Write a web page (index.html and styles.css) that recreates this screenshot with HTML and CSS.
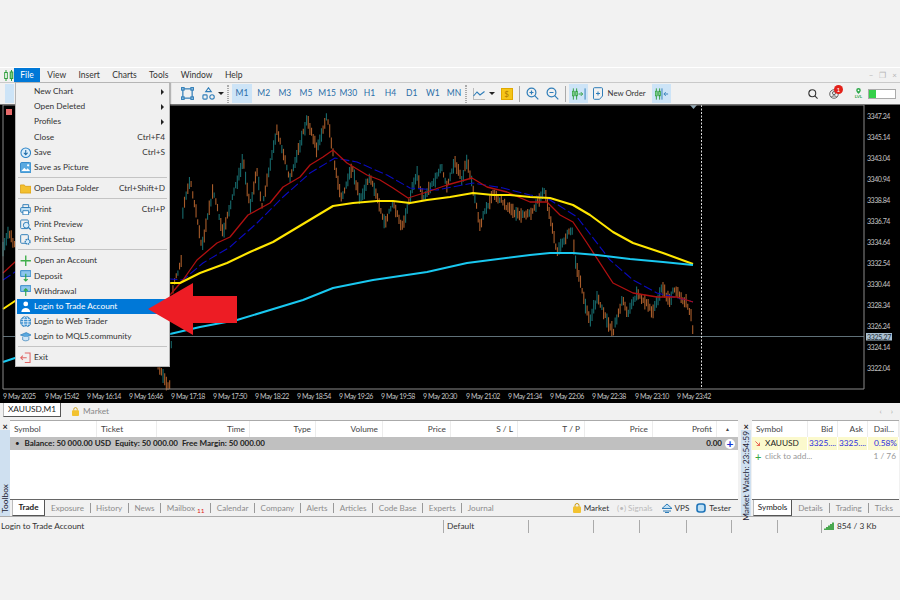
FILE: index.html
```html
<!DOCTYPE html>
<html lang="en">
<head>
<meta charset="utf-8">
<title>MetaTrader 5</title>
<link rel="stylesheet" href="styles.css">
</head>
<body>
<div class="top-strip"></div>
<div class="app">
  <nav class="menubar">
    <svg class="logo" viewBox="0 0 10 11"><path d="M2 0v11M7.500 0v11" stroke="#2e9e3c" stroke-width="1"/><rect x=".7" y="2.500" width="2.600" height="6" fill="#fff" stroke="#2e9e3c"/><rect x="6.200" y="2" width="2.600" height="6.500" fill="#7fd08a" stroke="#2e9e3c"/></svg>
    <span class="mi mi-active">File</span><span class="mi mi-view">View</span><span class="mi">Insert</span><span class="mi">Charts</span><span class="mi">Tools</span><span class="mi">Window</span><span class="mi">Help</span>
    <span class="winctl"><span>–</span><span>❐</span><span>×</span></span>
  </nav>

  <div class="toolbar">
    <span class="tb-hidden"><span class="tb-on tb-first"></span></span>
    <svg class="ic14" viewBox="0 0 14 14" fill="none" stroke="#2f7db8" stroke-width="1.300"><rect x="2" y="2" width="10" height="10"/><g fill="#cfe4f4"><rect x=".7" y=".7" width="2.600" height="2.600"/><rect x="10.700" y=".7" width="2.600" height="2.600"/><rect x=".7" y="10.700" width="2.600" height="2.600"/><rect x="10.700" y="10.700" width="2.600" height="2.600"/></g></svg>
    <svg class="ic14 shapes" viewBox="0 0 14 14" fill="none" stroke="#2f7db8" stroke-width="1.200"><path d="M7 .8 10 5H4z"/><rect x="1" y="8.500" width="4.500" height="4.500" rx="1"/><circle cx="10.800" cy="10.700" r="2.400"/></svg>
    <span class="caret"></span>
    <span class="tb-sep sep-a"></span>
    <div class="tfs">
      <span class="tf tf-on">M1</span><span class="tf">M2</span><span class="tf">M3</span><span class="tf">M5</span><span class="tf">M15</span><span class="tf">M30</span><span class="tf">H1</span><span class="tf">H4</span><span class="tf">D1</span><span class="tf">W1</span><span class="tf">MN</span>
    </div>
    <span class="tb-sep sep-b"></span>
    <svg class="ic12" viewBox="0 0 12 12" fill="none"><path d="M0 11.500h12M.5 0v12" stroke="#bbb"/><path d="M.5 8 4 4l3 3 4.500-3.500" stroke="#2f7db8" stroke-width="1.100"/></svg>
    <span class="caret caret-b"></span>
    <span class="coin">$</span>
    <span class="tb-sep2 sep-c"></span>
    <svg class="ic13" viewBox="0 0 13 13" fill="none" stroke="#2f7db8" stroke-width="1.200"><circle cx="5.500" cy="5.500" r="4.400"/><path d="m8.700 8.700 3.600 3.600M3.500 5.500h4M5.500 3.500v4"/></svg>
    <svg class="ic13 zoomout" viewBox="0 0 13 13" fill="none" stroke="#2f7db8" stroke-width="1.200"><circle cx="5.500" cy="5.500" r="4.400"/><path d="m8.700 8.700 3.600 3.600M3.500 5.500h4"/></svg>
    <span class="tb-sep2 sep-d"></span>
    <span class="tb-on tb-scroll"><svg class="ic14w" viewBox="0 0 16 12" fill="none"><path d="M2.500 0v12M6 0v12" stroke="#2e9e3c"/><rect x="1.500" y="3" width="2" height="5" fill="#7fd08a" stroke="#2e9e3c" stroke-width=".7"/><rect x="5" y="3" width="2" height="5" fill="#7fd08a" stroke="#2e9e3c" stroke-width=".7"/><path d="M8 6h4M10.500 4l2 2-2 2" stroke="#2e9e3c"/><path d="M15 0v12" stroke="#2f7db8"/></svg></span>
    <svg class="ic-order" viewBox="0 0 10 13" fill="none" stroke="#2f7db8"><path d="M1.500.7h7a1 1 0 0 1 1 1V9L6.500 12.300h-5a1 1 0 0 1-1-1V1.700a1 1 0 0 1 1-1z"/><path d="M3 6.500h4M5 4.500v4"/></svg>
    <span class="neworder">New Order</span>
    <span class="tb-on tb-shift"><svg class="ic14w" viewBox="0 0 16 12" fill="none"><path d="M2.500 0v12M6 0v12" stroke="#2e9e3c"/><rect x="1.500" y="3" width="2" height="5" fill="#7fd08a" stroke="#2e9e3c" stroke-width=".7"/><rect x="5" y="3" width="2" height="5" fill="#7fd08a" stroke="#2e9e3c" stroke-width=".7"/><path d="M8.500 0v12" stroke="#2f7db8"/><path d="M15 6h-4M12.500 4l-2 2 2 2" stroke="#2f7db8"/></svg></span>
    <span class="tb-right">
      <svg class="ic-search" viewBox="0 0 11 11" fill="none" stroke="#333" stroke-width="1.200"><circle cx="4.700" cy="4.700" r="3.800"/><path d="m7.500 7.500 3 3"/></svg>
      <span class="notif">
        <svg class="ic-user" viewBox="0 0 11 11" fill="none" stroke="#555"><circle cx="5.500" cy="5.500" r="4.700"/><circle cx="5.500" cy="4.500" r="1.700"/><path d="M2.500 9c.6-2 5.400-2 6 0"/></svg>
        <span class="badge">1</span>
      </span>
      <span class="lvl"><svg class="ic-pin" viewBox="0 0 8 7"><path d="M4 0a2.700 2.700 0 0 1 2.700 2.700C6.700 4.500 4 7 4 7S1.300 4.500 1.300 2.700A2.700 2.700 0 0 1 4 0z" fill="#2ea84a"/><circle cx="4" cy="2.700" r="1" fill="#fff"/></svg><span class="lvl-t">LVL</span></span>
      <span class="battery"><span class="battery-fill"></span></span>
    </span>
  </div>

  <section class="chart">
    <svg class="chart-svg" viewBox="0 105 900 298">
      <rect x="0" y="105" width="900" height="298" fill="#000"/>
      <g id="bars"></g>
      <path class="grid-line" d="M3 336.500H864"/>
      <path class="cross" d="M701.500 105V389"/>
      <path class="marker" d="M690 105h7l-3.500 4z"/>
      <polyline class="ma blue" points="3,280 15,272 170,279 183,280 203,263 230,247 257,223 283,197 310,173 335,158 357,162 387,175 410,188 437,190 473,183 503,188 530,195 547,198 577,217 610,260 633,280 657,293 687,300 693,302"/>
      <polyline class="ma red" points="3,273 15,262 170,295 183,280 197,260 217,243 230,237 248,215 270,203 283,187 300,177 310,165 323,157 333,150 347,163 367,175 380,180 393,188 408,198 427,192 447,185 472,178 487,187 507,192 530,202 547,202 560,215 573,222 587,243 613,283 633,293 657,297 677,297 693,302"/>
      <polyline class="ma yellow" points="3,309 15,301 170,283 180,283 200,273 227,263 250,252 273,242 293,230 313,218 333,206 353,203 377,201 393,201 410,203 427,200 450,197 473,193 493,195 510,195 530,197 550,198 573,205 590,215 613,232 633,243 663,253 693,264"/>
      <polyline class="ma cyan" points="3,362 15,358 170,334 200,327 237,320 303,300 333,288 373,280 427,272 467,263 530,255 550,253 573,253 597,255 630,259 663,262 693,265"/>
      <path class="frame" d="M3 105V389H864V105H3"/>
      <rect class="flag" x="6" y="109" width="6" height="6"/>
      <g class="ax-y">
        <text x="867" y="118.500">3347.24</text><text x="867" y="139.500">3345.14</text><text x="867" y="160.500">3343.04</text><text x="867" y="181.500">3340.94</text><text x="867" y="202.500">3338.84</text><text x="867" y="223.500">3336.74</text><text x="867" y="244.500">3334.64</text><text x="867" y="265.500">3332.54</text><text x="867" y="286.500">3330.44</text><text x="867" y="307.500">3328.34</text><text x="867" y="328.500">3326.24</text><text x="867" y="349.500">3324.14</text><text x="867" y="370.500">3322.04</text>
      </g>
      <rect class="tag" x="866" y="333" width="26" height="7.500"/>
      <text class="tag-t" x="867" y="339.500">3325.27</text>
      <g class="ax-x">
        <text x="3" y="398.500">9 May 2025</text><text x="45" y="398.500">9 May 15:42</text><text x="87" y="398.500">9 May 16:14</text><text x="129" y="398.500">9 May 16:46</text><text x="171" y="398.500">9 May 17:18</text><text x="213" y="398.500">9 May 17:50</text><text x="255" y="398.500">9 May 18:22</text><text x="297" y="398.500">9 May 18:54</text><text x="339" y="398.500">9 May 19:26</text><text x="381" y="398.500">9 May 19:58</text><text x="423" y="398.500">9 May 20:30</text><text x="466" y="398.500">9 May 21:02</text><text x="508" y="398.500">9 May 21:34</text><text x="550" y="398.500">9 May 22:06</text><text x="592" y="398.500">9 May 22:38</text><text x="635" y="398.500">9 May 23:10</text><text x="677" y="398.500">9 May 23:42</text>
      </g>
    </svg>
  </section>

  <div class="chart-tabs">
    <span class="ctab-active">XAUUSD,M1</span>
    <svg class="lock" viewBox="0 0 8 10"><path d="M2 4V2.500a2 2 0 0 1 4 0V4" fill="none" stroke="#c99a10"/><rect y="3.500" width="8" height="6.500" rx="1" fill="#f2c230"/></svg>
    <span class="ctab">Market</span>
    <span class="ctab-nav"><span>‹</span><span>›</span></span>
  </div>

  <div class="terminal">
    <aside class="strip strip-left"><span class="strip-x">×</span><span class="strip-t">Toolbox</span></aside>
    <div class="pane pane-main">
      <div class="grid trade-head">
        <span class="l">Symbol</span><span class="l">Ticket</span><span>Time</span><span>Type</span><span>Volume</span><span>Price</span><span>S / L</span><span>T / P</span><span>Price</span><span>Profit</span><span class="sort">▲</span>
      </div>
      <div class="balance">
        <span class="bullet">•</span><span class="bal-t">Balance: 50 000.00 USD&nbsp; Equity: 50 000.00&nbsp; Free Margin: 50 000.00</span>
        <span class="bal-v">0.00</span><span class="bal-plus">+</span>
      </div>
      <div class="pane-fill"></div>
      <div class="tabs tabs-main">
        <span class="tab tab-on tab-trade">Trade</span><span class="tab">Exposure</span><span class="tab">History</span><span class="tab">News</span><span class="tab">Mailbox<sub class="mail">11</sub></span><span class="tab">Calendar</span><span class="tab">Company</span><span class="tab">Alerts</span><span class="tab">Articles</span><span class="tab">Code Base</span><span class="tab">Experts</span><span class="tab tab-last">Journal</span>
        <span class="svc">
          <svg class="lock2" viewBox="0 0 8 10"><path d="M2 4V2.500a2 2 0 0 1 4 0V4" fill="none" stroke="#c99a10"/><rect y="3.500" width="8" height="6.500" rx="1" fill="#f2c230"/></svg><span class="svc-t">Market</span>
          <span class="svc-off">(•) Signals</span>
          <svg class="cloud" viewBox="0 0 12 10" fill="#bfe0f5" stroke="#2f7db8"><path d="M1 5.500 6 1l5 4.500H1z"/><path d="M2 8h8M4 9.500h4" fill="none"/></svg><span class="svc-t">VPS</span>
          <svg class="tester" viewBox="0 0 10 10"><rect x="1" y="1" width="8" height="8" rx="2.500" fill="#bfe0f5" stroke="#1f74b8" stroke-width="1.600"/></svg><span class="svc-t">Tester</span>
        </span>
      </div>
    </div>
    <aside class="strip strip-right"><span class="strip-x">×</span><span class="strip-t">Market Watch: 23:54:59</span></aside>
    <div class="pane pane-mw">
      <div class="grid-mw mw-head"><span class="l">Symbol</span><span>Bid</span><span>Ask</span><span>Dail...</span></div>
      <div class="grid-mw mw-row">
        <span class="l mw-sym"><svg class="down" viewBox="0 0 6 6" fill="none" stroke="#e2453a"><path d="m.5.500 5 5M5.500 2v3.500H2"/></svg>XAUUSD</span><span class="num">3325....</span><span class="num">3325....</span><span class="num">0.58%</span>
      </div>
      <div class="mw-add"><span class="plus">+</span><span class="add-t">click to add...</span><span class="add-c">1 / 76</span></div>
      <div class="pane-fill"></div>
      <div class="tabs tabs-mw"><span class="tab tab-on tab-sym">Symbols</span><span class="tab tab-mw">Details</span><span class="tab tab-mw">Trading</span><span class="tab tab-mw tab-last">Ticks</span></div>
    </div>
  </div>

  <footer class="status">
    <span>Login to Trade Account</span><span class="st">Default</span><span class="st"></span><span class="st"></span><span class="st"></span><span class="st"></span><span class="st"></span><span class="st"></span>
    <span class="st st-net"><svg class="net" viewBox="0 0 10 8"><path d="M0 8V6.500h2V8zM2 8V5h2v3zM4 8V3.500h2V8zM6 8V2h2v6zM8 8V.5h2V8z" fill="#49a84f"/></svg>854 / 3 Kb</span>
  </footer>
</div>

<div class="file-menu">
  <div class="row"><span class="i"></span><span>New Chart</span><span class="sub"></span></div>
  <div class="row"><span class="i"></span><span>Open Deleted</span><span class="sub"></span></div>
  <div class="row"><span class="i"></span><span>Profiles</span><span class="sub"></span></div>
  <div class="row"><span class="i"></span><span>Close</span><span class="key">Ctrl+F4</span></div>
  <div class="row"><span class="i"><svg viewBox="0 0 12 12" fill="none" stroke="#2f86c8" stroke-width="1.100"><circle cx="6" cy="6" r="5" fill="#dbeefb"/><path d="M6 3v5M4 6l2 2 2-2" stroke="#1c6aa6"/></svg></span><span>Save</span><span class="key">Ctrl+S</span></div>
  <div class="row"><span class="i"><svg viewBox="0 0 12 12"><rect x=".5" y=".5" width="11" height="11" rx="1.500" fill="#5aa9e0" stroke="#2f86c8"/><path d="m1.500 9.500 3-3.500 2 2 1.500-1.500 2.500 3z" fill="#fff"/><circle cx="8.500" cy="3.500" r="1.200" fill="#fff"/></svg></span><span>Save as Picture</span></div>
  <div class="msep"></div>
  <div class="row"><span class="i"><svg viewBox="0 0 12 10"><path d="M.5 1h4l1 1.500h6V9.500H.5z" fill="#f3c02f" stroke="#d99e12" stroke-width=".8"/></svg></span><span>Open Data Folder</span><span class="key">Ctrl+Shift+D</span></div>
  <div class="msep"></div>
  <div class="row"><span class="i"><svg viewBox="0 0 12 12" fill="#bfe0f5" stroke="#2f7db8"><path d="M3 .7h6v3H3z" fill="none"/><rect x=".7" y="3.700" width="10.600" height="5" rx="1"/><path d="M3 7h6v4.300H3z" fill="#fff"/></svg></span><span>Print</span><span class="key">Ctrl+P</span></div>
  <div class="row"><span class="i"><svg viewBox="0 0 12 12" fill="none" stroke="#2f7db8"><rect x=".7" y="1" width="8" height="9" rx="1"/><circle cx="6.500" cy="6.500" r="3" fill="#dbeefb"/><path d="m8.700 8.700 2.600 2.600" stroke-width="1.300"/></svg></span><span>Print Preview</span></div>
  <div class="row"><span class="i"><svg viewBox="0 0 12 12" fill="none" stroke="#2f7db8"><rect x=".7" y=".7" width="8" height="9" rx="1"/><circle cx="8" cy="8" r="2.500" fill="#dbeefb" stroke-width="1.400" stroke-dasharray="1.500 .6"/></svg></span><span>Print Setup</span></div>
  <div class="msep"></div>
  <div class="row"><span class="i"><svg viewBox="0 0 10 10" stroke="#3fae4a" stroke-width="1.200"><path d="M5 .5v9M.5 5h9"/></svg></span><span>Open an Account</span></div>
  <div class="row"><span class="i"><svg viewBox="0 0 12 12"><path d="M.7.7h10.600v6H.7z" fill="#8cc6ec" stroke="#2f86c8"/><path d="M6 4v7.500M4 9.500l2 2 2-2" fill="none" stroke="#2fa84a" stroke-width="1.200"/></svg></span><span>Deposit</span></div>
  <div class="row"><span class="i"><svg viewBox="0 0 12 12"><path d="M.7.7h10.600v6H.7z" fill="#8cc6ec" stroke="#2f86c8"/><path d="M6 11.500V4M4 6l2-2 2 2" fill="none" stroke="#2fa84a" stroke-width="1.200"/></svg></span><span>Withdrawal</span></div>
  <div class="row row-on"><span class="i"><svg viewBox="0 0 10 11" fill="#fff"><circle cx="5" cy="2.800" r="2.300"/><path d="M.8 10.500c0-5 8.400-5 8.400 0z"/></svg></span><span>Login to Trade Account</span></div>
  <div class="row"><span class="i"><svg viewBox="0 0 12 12" fill="none" stroke="#fff" stroke-width=".8"><circle cx="6" cy="6" r="5.500" fill="#3a8fd0" stroke="#2f7db8"/><ellipse cx="6" cy="6" rx="2.300" ry="5.300"/><path d="M.7 6h10.600M1.500 3.500h9M1.500 8.500h9"/></svg></span><span>Login to Web Trader</span></div>
  <div class="row"><span class="i"><svg viewBox="0 0 13 11"><path d="M.5 3.500 7 .8l5.500 2.700L7 6z" fill="#5aa9e0" stroke="#2f7db8" stroke-width=".8"/><path d="M3 5.500V9c2 1.500 5 1.500 7 0V5.500" fill="#cfe6f7" stroke="#2f7db8" stroke-width=".8"/></svg></span><span>Login to MQL5.community</span></div>
  <div class="msep"></div>
  <div class="row"><span class="i"><svg viewBox="0 0 12 12" fill="none" stroke="#e06666" stroke-width="1.100"><path d="M5 1h5.500v10H5M1 6h6M3 3.800 .8 6 3 8.200"/></svg></span><span>Exit</span></div>
</div>

<svg class="red-arrow" viewBox="148 283 89 52"><path d="M148 309 193 283V296H237V323H193V335z"/></svg>
<script src="chart.js"></script>
</body>
</html>
```
FILE: styles.css
```css
* { box-sizing: border-box; }
html, body { margin: 0; height: 100%; }
body {
  width: 900px; height: 600px; overflow: hidden; position: relative;
  background: #f2f2f2; color: #333;
  font: 8.3px/1 Lato, "Liberation Sans", sans-serif;
}
svg { display: block; flex: none; }
.top-strip { height: 68px; border-bottom: 1px solid #fff; }

/* menu bar */
.menubar { height: 14px; display: flex; align-items: center; background: #f1f1f1; padding-left: 4px; }
.logo { width: 10px; height: 11px; }
.mi { padding: 0 6.200px; height: 14px; line-height: 14px; font-size: 8.500px; color: #333; }
.mi-active { background: #0078d7; color: #fff; width: 26px; text-align: center; padding: 0; margin-right: 0; }
.mi-view { margin-left: 1px; }
.winctl { margin-left: auto; display: flex; gap: 6px; padding-right: 3px; color: #b5b5b5; font-size: 8px; }

/* toolbar */
.toolbar { height: 23px; display: flex; align-items: center; border-top: 1px solid #c9c9c9; border-bottom: 1px solid #777; background: #f1f1f1; }
.tb-hidden { width: 181px; display: flex; align-items: center; padding-left: 5px; flex: none; }
.tb-on { background: #cde4f7; height: 19px; display: flex; align-items: center; justify-content: center; flex: none; }
.tb-first { width: 9px; }
.ic14 { width: 13px; height: 13px; }
.shapes { margin-left: 8px; }
.caret { width: 0; height: 0; border: 3px solid transparent; border-top: 3.500px solid #222; border-bottom: 0; margin-left: 3px; flex: none; }
.caret-b { margin-left: 4px; }
.tb-sep { width: 2px; height: 18px; border-left: 1px dotted #aaa; border-right: 1px dotted #aaa; flex: none; }
.tb-sep2 { width: 1px; height: 16px; background: #aaa; flex: none; }
.sep-a { margin-left: 3px; margin-right: 3px; }
.tfs { display: flex; flex: none; }
.tf { width: 21.150px; text-align: center; height: 19px; line-height: 19px; color: #2a6ea8; font-size: 8.500px; }
.tf-on { background: #cde4f7; width: 20px; margin-right: 1.150px; }
.sep-b { margin-left: 0; margin-right: 6px; }
.ic12 { width: 12px; height: 12px; }
.coin { width: 12px; height: 12px; background: #f5c518; border: 1px solid #e0a800; color: #b07a00; text-align: center; line-height: 10px; margin-left: 6px; font-size: 8px; flex: none; }
.sep-c { margin-left: 6px; margin-right: 6px; }
.ic13 { width: 13px; height: 13px; }
.zoomout { margin-left: 7px; }
.sep-d { margin-left: 6px; margin-right: 3px; }
.tb-scroll { width: 19px; }
.tb-shift { width: 19px; margin-left: 6px; }
.ic14w { width: 15px; height: 12px; }
.ic-order { width: 10px; height: 13px; margin-left: 5px; }
.neworder { margin-left: 5px; color: #333; font-size: 7.800px; }
.tb-right { margin-left: auto; display: flex; align-items: center; padding-right: 4px; }
.ic-search { width: 10px; height: 10px; margin-right: 11px; }
.notif { position: relative; width: 11px; margin-right: 14px; }
.ic-user { width: 10px; height: 10px; }
.badge { position: absolute; left: 5px; top: -4px; width: 9px; height: 9px; border-radius: 50%; background: #e32119; color: #fff; font-size: 6.500px; line-height: 9px; text-align: center; }
.lvl { display: flex; flex-direction: column; align-items: center; width: 9px; margin-right: 5px; }
.ic-pin { width: 7px; height: 6px; }
.lvl-t { font-size: 4.500px; color: #2ea84a; font-weight: 700; margin-top: 1px; }
.battery { width: 28px; height: 10px; border: 1px solid #aaa; background: #fff; display: block; }
.battery-fill { display: block; width: 7px; height: 100%; background: #35d04a; }

/* chart */
.chart { height: 298px; background: #000; }
.chart-svg { width: 900px; height: 298px; }
.frame { fill: none; stroke: #8a8a8a; stroke-width: 1; }
.grid-line { stroke: #5f7078; stroke-width: 1; }
.cross { stroke: #d8d8d8; stroke-width: 1; stroke-dasharray: 2 1.500; }
.marker { fill: #8ea7b5; }
.ma { fill: none; stroke-linejoin: round; }
.yellow { stroke: #ffe600; stroke-width: 2.100; }
.cyan { stroke: #19c8f0; stroke-width: 2; }
.red { stroke: #b01010; stroke-width: 1.300; }
.blue { stroke: #0a0ac0; stroke-width: 1.100; stroke-dasharray: 9 3; }
.flag { fill: #e66a6a; }
.ax-y text, .ax-x text { fill: #c4c4c4; font: 7px Lato, sans-serif; letter-spacing: -.45px; }
.tag { fill: #a8bfd1; }
.tag-t { fill: #1e2b33; font: 7px Lato, sans-serif; letter-spacing: -.3px; }

/* chart tabs */
.chart-tabs { height: 16px; display: flex; align-items: center; background: #f1f1f1; padding-left: 3px; }
.ctab-active { width: 58px; height: 14px; background: #fff; border: 1px solid #bbb; border-right: 1px solid #555; border-bottom: 1px solid #555; border-top: 0; text-align: center; line-height: 13px; align-self: flex-start; color: #222; }
.lock { width: 7px; height: 9px; margin-left: 11px; }
.ctab { margin-left: 4px; color: #888; }
.ctab-nav { margin-left: auto; display: flex; gap: 9px; padding-right: 7px; color: #aaa; font-size: 8px; }

/* terminal */
.terminal { height: 98px; display: flex; border-bottom: 1px solid #aaa; background: #f1f1f1; padding-top: 1px; }
.strip { width: 10px; position: relative; background: linear-gradient(#f0f0f0 0 10px, #cfe0f0 10px); flex: none; display: flex; flex-direction: column; align-items: center; }
.strip-x { font-size: 9px; font-weight: 700; line-height: 9px; margin-top: 2px; color: #222; }
.strip-t { writing-mode: vertical-rl; transform: rotate(180deg); margin-top: auto; margin-bottom: 3px; font-size: 8.400px; color: #223; line-height: 10px; white-space: nowrap; }
.pane { display: flex; flex-direction: column; background: #fff; border-top: 1px solid #aaa; }
.pane-main { width: 728px; }
.strip-right { margin-left: 3px; }
.pane-mw { width: 147px; margin-left: 1px; }
.pane-fill { flex: 1; }
.grid { display: grid; grid-template-columns: 87px 60px 93px 66px 67px 68px 67px 67px 68px 64px 21px; height: 16px; align-items: stretch; }
.grid > span, .grid-mw > span { text-align: right; padding: 0 4px; line-height: 16px; border-right: 1px solid #ececec; color: #444; white-space: nowrap; overflow: hidden; }
.grid > .l, .grid-mw > .l { text-align: left; }
.grid > .sort { font-size: 5px; text-align: center; border: 0; padding: 0; }
.balance { height: 13px; background: #c0c0c0; display: flex; align-items: center; font-size: 8px; font-weight: 700; color: #222; line-height: 13px; }
.bullet { margin-left: 5px; width: 9.500px; font-weight: 400; }
.bal-v { margin-left: auto; margin-right: 3px; }
.bal-plus { width: 10px; height: 10px; border-radius: 50%; background: #fff; color: #1430d0; font-size: 12px; line-height: 9px; text-align: center; margin-right: 3px; }
.tabs { height: 17px; display: flex; align-items: center; background: #f1f1f1; border-top: 1px solid #666; flex: none; }
.tabs-main { padding-left: 2px; }
.tab { color: #8c8c8c; padding: 0 5.600px; border-right: 1px solid #999; line-height: 10px; height: 10px; white-space: nowrap; font-size: 8.100px; }
.tab:nth-child(2) { padding-left: 6px; }
.tab-mw { padding: 0 6px; }
.tab-last { border-right: 0; }
.tab-on { background: #fff; color: #222; height: 16px; line-height: 14px; border: 1px solid #666; border-top: 0; border-left: 1px solid #bbb; border-right: 1px solid #555; border-bottom: 1px solid #555; align-self: flex-start; font-weight: 700; }
.tab-trade { width: 33px; text-align: center; padding: 0; margin-right: 0; }
.tab-sym { width: 42px; text-align: center; padding: 0; margin-left: 1px; font-weight: 400; }
.mail { color: #e02020; font-size: 6.500px; vertical-align: -2px; margin-left: 2px; line-height: 0; }
.svc { margin-left: auto; display: flex; align-items: center; padding-right: 7px; }
.svc-t { color: #333; font-size: 8.100px; }
.lock2 { width: 8px; height: 10px; margin-right: 3px; }
.svc-off { color: #bbb; margin-left: 8px; margin-right: 8px; font-size: 8.100px; }
.cloud { width: 12px; height: 10px; margin-right: 2px; }
.tester { width: 10px; height: 10px; margin-left: 7px; margin-right: 3px; }

/* market watch */
.grid-mw { display: grid; grid-template-columns: 56px 30px 30px 31px; }
.mw-head { height: 16px; }
.mw-row { height: 13px; background: #fbf9cd; }
.mw-row > span { line-height: 13px; border-right: 1px solid #fff; }
.mw-row .num { color: #2a2ae0; padding: 0 1px; }
.mw-sym { display: flex; align-items: center; color: #222 !important; padding: 0 0 0 3px !important; }
.down { width: 5px; height: 5px; margin-right: 5px; }
.mw-add { height: 13px; display: flex; align-items: center; padding: 0 3px 0 3px; color: #999; }
.plus { color: #35a83f; font-size: 11px; width: 10px; line-height: 11px; }
.add-c { margin-left: auto; }
.tabs-mw { padding-left: 0; }

/* status bar */
.status { height: 18px; display: grid; grid-template-columns: 442px 85px 65px 46px 47px 45px 46px 44px 79px; align-items: center; padding-left: 1px; color: #333; }
.st { border-left: 1px solid #aaa; height: 13px; line-height: 13px; padding-left: 3px; white-space: nowrap; }
.st-net { display: flex; align-items: center; gap: 3px; padding-left: 2px; }
.net { width: 10px; height: 8px; }

/* file menu overlay */
.file-menu { position: absolute; left: 15px; top: 82px; width: 155px; height: 285px; padding: 1px; background: #f0f0f0; border: 1px solid #b5b5b5; box-shadow: 1px 1px 1px rgba(0,0,0,.25); z-index: 5; }
.row { height: 15.200px; display: flex; align-items: center; padding-right: 3px; line-height: 15px; color: #333; }
.row .i { width: 17px; display: flex; justify-content: center; flex: none; }
.row .i svg { width: 11.500px; height: 11.500px; }
.key { margin-left: auto; }
.sub { margin-left: auto; width: 0; height: 0; border: 3px solid transparent; border-left: 3.500px solid #222; border-right: 0; margin-right: 1px; }
.msep { height: 5.800px; position: relative; }
.msep::after { content: ""; position: absolute; left: 1px; right: 1px; top: 2px; height: 1px; background: #c4c4c4; }
.row-on { background: #0078d7; color: #fff; }

.red-arrow { position: absolute; left: 148px; top: 283px; width: 89px; height: 52px; z-index: 6; }
.red-arrow path { fill: #ed1c24; }
```
FILE: chart.js
```js
// Draws the price bars from a coarse price path.
var path = [[3,250],[8,232],[15,245],[150,340],[160,367],[167,385],[170,386],[173,287],[182,260],[183,207],[190,180],[197,217],[202,247],[213,190],[223,233],[243,160],[250,207],[257,170],[262,207],[277,130],[290,180],[307,120],[317,150],[327,115],[335,167],[342,200],[352,167],[360,200],[370,177],[385,223],[393,203],[402,227],[417,172],[423,200],[442,167],[447,187],[455,163],[462,180],[467,160],[480,225],[493,193],[513,213],[530,215],[545,190],[555,243],[558,252],[572,227],[575,260],[585,303],[590,320],[597,298],[613,332],[622,300],[628,313],[637,293],[653,312],[662,287],[670,303],[673,290],[687,303],[692,320],[693.5,338]];
var seed = 7;
function rnd() { seed = (seed * 16807) % 2147483647; return seed / 2147483647; }
function priceAt(x) {
  for (var i = 1; i < path.length; i++) {
    if (x <= path[i][0]) {
      var a = path[i - 1], b = path[i];
      return { y: a[1] + (b[1] - a[1]) * (x - a[0]) / (b[0] - a[0]), up: b[1] < a[1] };
    }
  }
  return { y: path[path.length - 1][1], up: false };
}
var g = document.getElementById('bars');
for (var x = 3; x <= 693.5; x += 1.65) {
  var p = priceAt(x);
  var up = rnd() < (p.up ? 0.8 : 0.2);
  var h = 2.5 + rnd() * 5;
  var mid = p.y + (rnd() - 0.5) * 4;
  var l = document.createElementNS('http://www.w3.org/2000/svg', 'line');
  l.setAttribute('x1', x); l.setAttribute('x2', x);
  l.setAttribute('y1', mid - h); l.setAttribute('y2', mid + h);
  l.setAttribute('stroke', up ? '#176a6c' : '#a85c2a');
  l.setAttribute('stroke-width', '1.1');
  g.appendChild(l);
}
```
